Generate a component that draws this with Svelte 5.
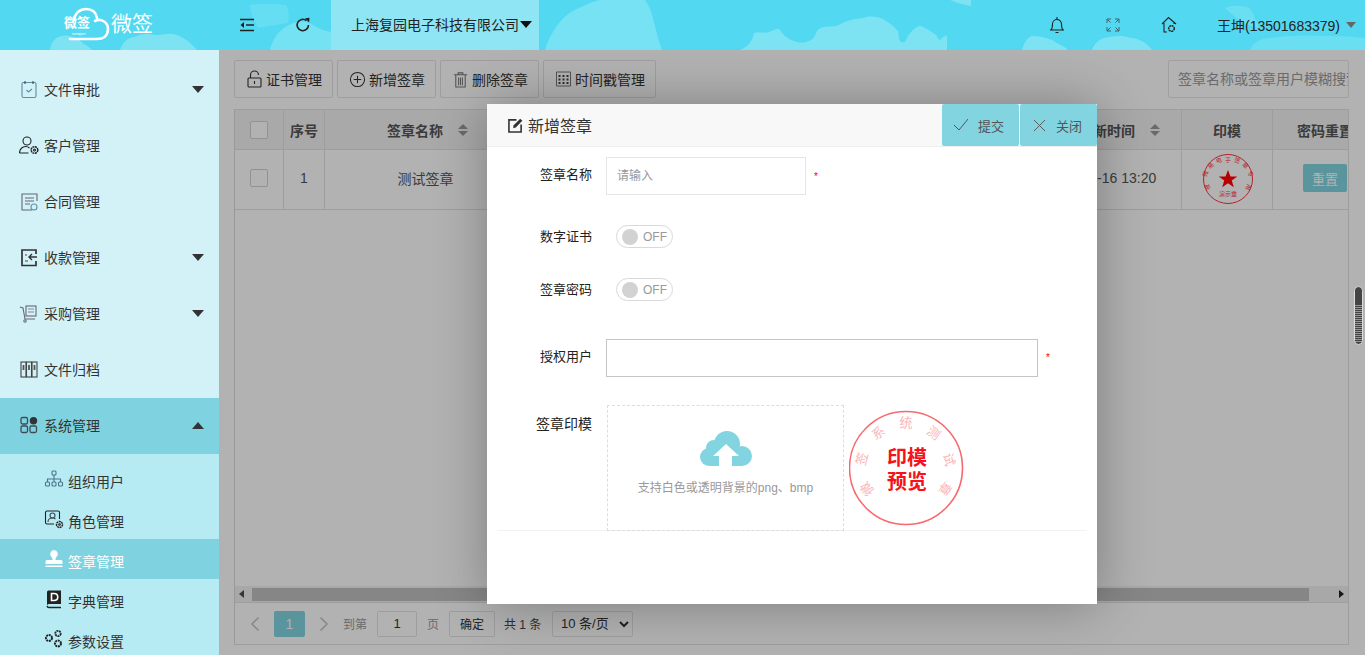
<script>
  const menu = [
    { name: '文件审批', icon: 'clip', caret: true },
    { name: '客户管理', icon: 'user' },
    { name: '合同管理', icon: 'doc' },
    { name: '收款管理', icon: 'pay', caret: true },
    { name: '采购管理', icon: 'cart', caret: true },
    { name: '文件归档', icon: 'files' }
  ]
  const subMenu = [
    { name: '组织用户', icon: 'org' },
    { name: '角色管理', icon: 'role' },
    { name: '签章管理', icon: 'stamp', active: true },
    { name: '字典管理', icon: 'dict' },
    { name: '参数设置', icon: 'gears' }
  ]
  const smallSeal = [
    [1228, 160, 0, '子'], [1219, 161, -20, '电'], [1237, 161, 20, '签'], [1245, 166, 45, '章'],
    [1211, 166, -45, '易'], [1250, 174, 70, '专'], [1206, 174, -70, '微'], [1208, 187, -110, '彼'], [1248, 187, 110, '用']
  ]
  const previewSeal = [
    [868, 488, -130, '微'], [863, 459, -75, '签'], [879, 434, -35, '系'], [906, 424, 0, '统'],
    [933, 434, 35, '测'], [948, 460, 75, '试'], [944, 488, 125, '章']
  ]
</script>

{#snippet icon(name)}
  <svg class="ic" viewBox="0 0 20 20" width="20" height="20" fill="none" stroke="#3f4a52" stroke-width="1.1">
    {#if name === 'clip'}
      <rect x="3" y="3.5" width="14" height="15" rx="1.5" stroke="#5b8fa8" /><path d="M6 2v3M14 2v3" stroke="#444" /><path d="M7.5 11l2 2 3.5-3" stroke="#5b8fa8" />
    {:else if name === 'user'}
      <circle cx="8" cy="6" r="4" stroke="#222" /><path d="M0.5 18c0-4 3-6.500 6-6.500 1.500 0 3 .5 4 1.500M0.500 18h9" stroke="#222" /><circle cx="15.500" cy="15" r="3.300" stroke-dasharray="2 .6" stroke-width="1.500" stroke="#222" /><circle cx="15.500" cy="15" r="1" stroke="#222" />
    {:else if name === 'doc'}
      <path d="M18 10V3H3v16h10" stroke="#667" /><path d="M6 7h9M6 10h9M6 13h5" stroke="#667" /><circle cx="15" cy="16" r="3" stroke="#6a8fa8" />
    {:else if name === 'pay'}
      <path d="M17 7V3H3v15.500h14V14" stroke-width="1.700" stroke="#333" /><path d="M18 10h-8M13 7l-3 3 3 3" stroke-width="1.400" stroke="#333" /><path d="M6 8h2M6 14h3" />
    {:else if name === 'cart'}
      <path d="M1 4l3 1 2 11h10" stroke="#667" /><rect x="7" y="3" width="10" height="10" stroke="#667" /><path d="M9 6h6M9 9h6" stroke="#889" /><circle cx="6" cy="18" r="1.200" stroke="#667" />
    {:else if name === 'files'}
      <rect x="2" y="3" width="5" height="15" stroke="#444" /><rect x="7.500" y="3" width="5" height="15" stroke="#444" /><rect x="13" y="3" width="5" height="15" stroke="#444" /><path d="M4.500 6v5M10 6v5M15.500 6v5" stroke="#555" stroke-width="1.800" />
    {:else if name === 'grid'}
      <rect x="2" y="2.500" width="6.500" height="6.500" rx="1.500" stroke-width="1.300" /><circle cx="14.500" cy="5.700" r="3.700" fill="#333" stroke="none" /><rect x="2" y="11" width="6.500" height="6.500" rx="1.500" stroke-width="1.300" /><rect x="11" y="11" width="6.500" height="6.500" rx="1.500" stroke-width="1.300" />
    {:else if name === 'org'}
      <rect x="8" y="2" width="4" height="4" rx="1" stroke="#4b7488" /><path d="M10 6v4M3.500 13v-3h13v3M10 10v3" stroke="#4b7488" /><rect x="1.500" y="13" width="4" height="4" rx="1" stroke="#4b7488" /><rect x="8" y="13" width="4" height="4" rx="1" stroke="#4b7488" /><rect x="14.500" y="13" width="4" height="4" rx="1" stroke="#4b7488" />
    {:else if name === 'role'}
      <path d="M10 15H3a1.500 1.500 0 0 1-1.500-1.500v-10A1.500 1.500 0 0 1 3 2h11a1.500 1.500 0 0 1 1.500 1.500V10" stroke="#222" /><circle cx="8.500" cy="6.500" r="2.500" /><path d="M4 13c0-3 2-4 4.500-4 1.500 0 2.500.5 3 1" /><circle cx="15.500" cy="15.500" r="3" stroke-dasharray="2 .6" stroke-width="1.500" stroke="#222" /><circle cx="15.500" cy="15.500" r=".8" stroke="#222" />
    {:else if name === 'stamp'}
      <path d="M10 1a4 4 0 0 0-2.500 7c.8.8 1 1.500 1 3H3a1.500 1.500 0 0 0-1.500 1.500V15h17v-2.500A1.500 1.500 0 0 0 17 11h-5.500c0-1.500.2-2.200 1-3A4 4 0 0 0 10 1z" fill="#fff" stroke="none" /><rect x="1.500" y="16.500" width="17" height="1.500" fill="#fff" stroke="none" />
    {:else if name === 'dict'}
      <path d="M3 3a1.500 1.500 0 0 1 1.500-1.500H17V15H5a2 2 0 0 0-2 2z" fill="#222" stroke="none" /><path d="M3 17a2 2 0 0 0 2 1.500h12" stroke="#222" stroke-width="1.300" /><path d="M7.500 4.500h2.500c5 0 5 7 0 7H7.500z" fill="#222" stroke="#fff" stroke-width="1.600" />
    {:else if name === 'gears'}
      <circle cx="5" cy="9" r="3" stroke-width="2" stroke-dasharray="2 .7" stroke="#222" /><circle cx="14" cy="4.500" r="2.700" stroke-width="1.800" stroke-dasharray="2 .7" stroke="#222" /><circle cx="14" cy="14.500" r="3" stroke-width="2" stroke-dasharray="2 .7" stroke="#222" />
    {/if}
  </svg>
{/snippet}

{#snippet sort()}
  <span class="sort"><i class="up"></i><i class="down"></i></span>
{/snippet}

<div class="page">
  <header class="top">
    <svg class="sky" viewBox="0 0 1365 50" preserveAspectRatio="none" fill="#7de3f3">
      <path d="M50 50c1-8 5-13 12-14 6-2 16 2 22 8 4 2 6 4 8 6zM120 50c3-8 8-13 15-13 5-3 12-4 20-2 8 0 14-3 22 0 8 3 14 8 20 15z" />
      <path d="M250 5c12-2 24-1 36 0 4 6 3 12 2 18l-30 5c-4-8-8-16-8-23z" opacity=".45" />
      <path d="M270 50c2-10 8-18 14-22 6-4 14-8 22-6 8 2 12 8 25 10v18z" opacity=".8" />
      <path d="M545 50c4-14 14-30 26-38 12-6 24-12 30-12h44c6 8 8 18 11 30 2 8 4 14 6 20z" opacity=".85" />
      <path d="M740 50c8-3 12-8 14-17 5-2 10 1 15-1 4-1 8-4 10-3 3 4 6 8 12 11 8 3 12 4 20 0 6-4 4-10 10-12 5-3 12 0 18-3 8-5 16-6 24-7 6-2 12-2 20 1 6 4 10 6 15 12 1 4 0 8 3 11 4 1 4 0 6-4 2-4 8-12 14-12 6 3 12 6 16 10 1 4 3 5 5 2 2-2 4-2 5-3v15zM950 0h21v6c-6-1-14-3-21-6z" />
      <path d="M1022 50c2-6 4-12 10-14 8 0 14 2 20 4 6 4 12 6 16 10zM1092 50c2-6 6-10 12-12 10-2 18-3 26 0 8 0 16 4 22 12z" />
      <path d="M1225 8c8-3 18-3 24 0 6 6 6 12 10 20-10-2-20-6-34-20zM1250 50c2-6 10-12 20-12 14-2 30-3 50-2 18-1 32 1 45 2v12z" opacity=".55" />
    </svg>
    <div class="logo">
      <span class="cloud">
        <svg viewBox="0 0 44 34" width="44" height="34" fill="none" stroke="#fff" stroke-width="2.600">
          <path d="M8 13c1-7 6-11 12-11 6 0 10 3 11 9" stroke-linecap="round" />
          <path d="M29 14c6-3 13 1 13 8s-5 10-11 10H4" stroke-linecap="round" />
        </svg>
        <b>微签</b>
        <small>weiqian</small>
      </span>
      <span class="brand">微签</span>
    </div>
    <button class="head-btn" aria-label="收起菜单">
      <svg viewBox="0 0 16 14" width="16" height="14" fill="none" stroke="#222" stroke-width="1.500"><path d="M1 1.500h14M7 7h8M1 12.500h14" /><path d="M5 4L1.500 7 5 10z" fill="#222" stroke="none" /></svg>
    </button>
    <button class="head-btn" aria-label="刷新">
      <svg viewBox="0 0 16 16" width="16" height="16" fill="none" stroke="#222" stroke-width="1.600"><path d="M13.500 8a5.700 5.700 0 1 1-2-4.300" /><path d="M10 1.200l4.500-.4-.4 4.800z" fill="#222" stroke="none" /></svg>
    </button>
    <div class="company">上海复园电子科技有限公司<i class="caret black"></i></div>
    <div class="head-right">
      <span class="hi">
        <svg viewBox="0 0 16 18" width="16" height="18" fill="none" stroke="#222" stroke-width="1.100"><path d="M2 14c1.500-1.500 1.500-3 1.500-6a4.500 4.500 0 0 1 9 0c0 3 0 4.500 1.500 6zM1 14h14M6.500 16.500h3M8 1v2" /></svg>
      </span>
      <span class="hi">
        <svg viewBox="0 0 14 14" width="14" height="14" fill="none" stroke="#44616b" stroke-width="1"><path d="M1 5V1h4M9 1h4v4M13 9v4H9M5 13H1V9M1 1l3.500 3.500M13 1L9.500 4.500M13 13L9.500 9.500M1 13l3.500-3.500" /></svg>
      </span>
      <span class="hi">
        <svg viewBox="0 0 16 18" width="16" height="18" fill="none" stroke="#222" stroke-width="1.100"><path d="M1 8l6.500-6.500L15 8M3 7v9h3M13 7v1" /><circle cx="10.500" cy="12.500" r="2.800" stroke-width="1.500" stroke-dasharray="2 .6" /></svg>
      </span>
      <span class="who">王坤(13501683379)</span>
      <i class="caret gray"></i>
    </div>
  </header>

  <div class="body">
    <aside class="side">
      {#each menu as m}
        <div class="item">
          <span class="item-ic">{@render icon(m.icon)}</span>
          <span class="item-name">{m.name}</span>
          {#if m.caret}<i class="caret"></i>{/if}
        </div>
      {/each}
      <div class="item open">
        <span class="item-ic">{@render icon('grid')}</span>
        <span class="item-name">系统管理</span>
        <i class="caret flip"></i>
      </div>
      <div class="sub">
        {#each subMenu as s}
          <div class="sub-item" class:active={s.active}>
            <span class="sub-ic">{@render icon(s.icon)}</span>
            <span>{s.name}</span>
          </div>
        {/each}
      </div>
    </aside>

    <main class="main">
      <div class="toolbar">
        <button class="tool">
          <svg viewBox="0 0 16 18" width="15" height="18" fill="none" stroke="#333" stroke-width="1.100"><rect x="1.500" y="8" width="13" height="9" rx="1" /><path d="M4 8V5a4 4 0 0 1 8 0" /><path d="M8 11v3" /></svg>
          证书管理
        </button>
        <button class="tool">
          <svg viewBox="0 0 18 18" width="17" height="17" fill="none" stroke="#333" stroke-width="1.100"><circle cx="9" cy="9" r="7.500" /><path d="M9 5v8M5 9h8" /></svg>
          新增签章
        </button>
        <button class="tool">
          <svg viewBox="0 0 16 18" width="15" height="17" fill="none" stroke="#777" stroke-width="1.100"><path d="M1 4h14M5.500 4V2h5v2M3 4.500V17h10V4.500M6 7v8M8 7v8M10 7v8" /></svg>
          删除签章
        </button>
        <button class="tool">
          <svg viewBox="0 0 16 16" width="15" height="16" fill="#444" stroke="none"><path d="M1 1h14v14H1z" fill="none" stroke="#777" /><path d="M3 4h2v2H3zM7 4h2v2H7zM11 4h2v2h-2zM3 7.500h2v2H3zM7 7.500h2v2H7zM11 7.500h2v2h-2zM3 11h2v2H3zM7 11h2v2H7zM11 11h2v2h-2z" /></svg>
          时间戳管理
        </button>
        <input class="search" placeholder="签章名称或签章用户模糊搜索" />
      </div>

      <div class="panel">
        <div class="row head">
          <div class="c"><span class="check"></span></div>
          <div class="c">序号</div>
          <div class="c name-col">签章名称{@render sort()}</div>
          <div class="c">签章用户</div>
          <div class="c">数字证书</div>
          <div class="c time">更新时间{@render sort()}</div>
          <div class="c">印模</div>
          <div class="c clip">密码重置</div>
        </div>
        <div class="row data">
          <div class="c"><span class="check"></span></div>
          <div class="c">1</div>
          <div class="c">测试签章</div>
          <div class="c">王坤</div>
          <div class="c">否</div>
          <div class="c">2021-03-16 13:20</div>
          <div class="c"></div>
          <div class="c clip"><button class="reset">重置</button></div>
        </div>
        <div class="rest"></div>
        <div class="hscroll">
          <i class="arrow left"></i>
          <span class="thumb"></span>
          <i class="arrow right"></i>
        </div>
        <div class="pager">
          <svg viewBox="0 0 10 16" width="10" height="16" fill="none" stroke="#c2c2c2" stroke-width="1.500"><path d="M8.500 1.500L2 8l6.500 6.500" /></svg>
          <span class="cur">1</span>
          <svg viewBox="0 0 10 16" width="10" height="16" fill="none" stroke="#c2c2c2" stroke-width="1.500"><path d="M1.500 1.500L8 8l-6.500 6.500" /></svg>
          <span class="muted to">到第</span>
          <input class="page-no" value="1" />
          <span class="muted">页</span>
          <button class="ok">确定</button>
          <span class="total">共 1 条</span>
          <select class="size"><option>10 条/页</option></select>
        </div>
      </div>

      <div class="shade"></div>

      <section class="modal">
        <div class="modal-top">
          <svg viewBox="0 0 16 16" width="15" height="15" fill="none" stroke="#333" stroke-width="1.700"><path d="M9 2H1v13h13V7" /><path d="M5.500 11l.5-3.300L13 .8 15.300 3l-7 7z" fill="#333" stroke="none" /></svg>
          <span class="modal-title">新增签章</span>
          <div class="modal-btns">
            <button class="act"><svg viewBox="0 0 16 14" width="16" height="14" fill="none" stroke="#555" stroke-width="1"><path d="M1 7l5 5 9-11" /></svg><span>提交</span></button>
            <button class="act x"><svg viewBox="0 0 14 14" width="13" height="13" fill="none" stroke="#555" stroke-width="1"><path d="M1 1l12 12M13 1L1 13" /></svg><span>关闭</span></button>
          </div>
        </div>
        <div class="form">
          <div class="f name">
            <label for="sn">签章名称</label>
            <input id="sn" class="txt short" placeholder="请输入" />
            <em>*</em>
          </div>
          <div class="f sw one"><span class="lab">数字证书</span><span class="toggle"><i></i>OFF</span></div>
          <div class="f sw two"><span class="lab">签章密码</span><span class="toggle"><i></i>OFF</span></div>
          <div class="f users">
            <span class="lab">授权用户</span>
            <div class="txt long"></div>
            <em>*</em>
          </div>
          <div class="f seal">
            <span class="lab big">签章印模</span>
            <div class="upload">
              <svg viewBox="0 0 52 36" width="52" height="36" fill="#82d4e0">
                <circle cx="27" cy="13" r="13" /><circle cx="14" cy="17" r="8" /><circle cx="9" cy="26" r="9" /><circle cx="42" cy="25" r="10" />
                <rect x="9" y="20" width="33" height="15" />
                <path d="M26 13l13 12h-7v11H19V25h-6z" fill="#fff" />
              </svg>
              <span>支持白色或透明背景的png、bmp</span>
            </div>
          </div>
          <div class="line"></div>
        </div>
      </section>

      <svg class="seal-mini" viewBox="1200 151 56 56" width="56" height="56">
        <circle cx="1228" cy="179" r="24.500" fill="none" stroke="#b5222a" stroke-width="1" />
        <path d="M1228 170l2.500 6.500h6.800l-5.500 4 2 6.800-5.800-4-5.800 4 2-6.800-5.500-4h6.800z" fill="#b80000" />
        {#each smallSeal as [x, y, r, t]}
          <text {x} {y} transform="rotate({r} {x} {y})" text-anchor="middle" dominant-baseline="middle" class="mini-t">{t}</text>
        {/each}
        <text x="1228" y="196" text-anchor="middle" class="mini-t">演示章</text>
      </svg>

      <svg class="seal-big" viewBox="849 410 116 116" width="116" height="116">
        <circle cx="906" cy="468" r="56.500" fill="none" stroke="#f8686c" stroke-width="1.600" />
        {#each previewSeal as [x, y, r, t]}
          <text {x} {y} transform="rotate({r} {x} {y})" text-anchor="middle" dominant-baseline="middle" class="big-t">{t}</text>
        {/each}
        <text x="907" y="465" text-anchor="middle" class="big-c">印模</text>
        <text x="907" y="489" text-anchor="middle" class="big-c">预览</text>
      </svg>

      <div class="thumb-y"></div>
    </main>
  </div>
</div>

<style>
  :global(body) { margin: 0; background: #fbfbfb; }
  .page { width: 1365px; height: 655px; overflow: hidden; display: flex; flex-direction: column; font-family: "Liberation Sans", "Noto Sans CJK SC", sans-serif; font-size: 14px; color: #333; }
  button, input, select { font-family: inherit; }
  i { display: block; font-style: normal; }

  .top { position: relative; height: 50px; flex: none; background: #52d9f1; display: flex; align-items: center; color: #222; }
  .sky { position: absolute; left: 0; top: 0; width: 1365px; height: 50px; }
  .logo { position: relative; width: 219px; display: flex; align-items: center; padding-left: 64px; box-sizing: border-box; height: 50px; }
  .cloud { position: relative; width: 47px; height: 34px; margin-top: -3px; }
  .cloud svg { position: absolute; left: 2px; top: 0; }
  .cloud b { position: absolute; left: 0; top: 9px; font-size: 13px; line-height: 14px; color: #fff; letter-spacing: 0; }
  .cloud small { position: absolute; left: 8px; top: 24px; font-size: 4px; line-height: 5px; color: #fff; }
  .brand { color: #fff; font-size: 21px; line-height: 50px; margin-left: 0; margin-top: -3px; }
  .head-btn { position: relative; width: 56px; height: 50px; background: none; border: 0; padding: 0; display: flex; align-items: center; justify-content: center; }
  .company { position: relative; width: 208px; height: 50px; box-sizing: border-box; padding-left: 20px; background: #8fe5f3; display: flex; align-items: center; gap: 1px; line-height: 50px; }
  .head-right { position: relative; margin-left: auto; display: flex; align-items: center; height: 50px; }
  .hi { width: 56px; display: flex; justify-content: center; }
  .who { margin-left: 20px; width: 123px; white-space: nowrap; }

  .caret { width: 0; height: 0; border: 6px solid transparent; border-top: 7px solid #333; border-bottom: 0; }
  .caret.black { border-top-color: #111; margin-top: -1px; }
  .caret.gray { border-top-color: #666; border-left-width: 5px; border-right-width: 5px; border-top-width: 6px; margin: 0 9px 0 6px; }
  .caret.flip { transform: rotate(180deg); }

  .body { flex: 1; display: flex; min-height: 0; }
  .side { width: 219px; flex: none; background: #d3f2f7; padding-top: 12px; overflow: hidden; box-sizing: border-box; }
  .item { height: 56px; box-sizing: border-box; padding: 0 15px 2px 19px; display: flex; align-items: center; color: #333; }
  .item-ic { width: 25px; display: flex; }
  .item-name { flex: 1; }
  .item.open { background: #7fd3e0; }
  .sub { background: #b7ebf3; padding-top: 5px; }
  .sub-item { height: 40px; display: flex; align-items: center; padding-left: 44px; padding-top: 3px; box-sizing: border-box; color: #333; }
  .sub-ic { width: 24px; display: flex; margin-top: -3px; }
  .sub-item.active { background: #7fd3e0; color: #fff; }
  .ic { display: block; }

  .main { position: relative; flex: 1; min-width: 0; background: #fff; padding: 10px 16px 10px 15px; box-sizing: border-box; display: flex; flex-direction: column; }
  .toolbar { display: flex; gap: 4px; height: 38px; flex: none; margin-bottom: 11px; }
  .tool { height: 38px; box-sizing: border-box; padding: 0 10px 0 11px; background: #fff; border: 1px solid #e2e2e2; border-radius: 2px; display: flex; align-items: center; gap: 3px; font-size: 14px; color: #333; white-space: nowrap; }
  .tool svg { width: 17px; flex: none; }
  .search { margin-left: auto; width: 181px; height: 38px; box-sizing: border-box; border: 1px solid #e6e6e6; border-radius: 2px; padding: 0 0 0 9px; font-size: 14px; background: #fff; }
  .search::placeholder { color: #999; }

  .panel { flex: 1; display: flex; flex-direction: column; border: 1px solid #e2e2e2; border-left-color: #dcdcdc; min-height: 0; }
  .row { display: grid; grid-template-columns: 49px 41px 202px 274px 220px 161px 91px 75px; }
  .row .c { display: flex; align-items: center; justify-content: center; border-right: 1px solid #e2e2e2; border-bottom: 1px solid #e2e2e2; min-width: 0; white-space: nowrap; overflow: hidden; box-sizing: border-box; }
  .row .c:last-child { border-right: 0; }
  .head { height: 40px; background: #f2f2f2; font-weight: 700; color: #555; }
  .data { height: 60px; color: #555; }
  .data .c { padding-bottom: 3px; }
  .check { width: 16px; height: 16px; border: 1px solid #d2d2d2; border-radius: 2px; background: #fff; }
  .sort { display: inline-block; margin-left: 15px; }
  .sort i { width: 0; height: 0; border: 5px solid transparent; }
  .sort .up { border-top: 0; border-bottom: 5px solid #999; margin-bottom: 2px; }
  .sort .down { border-bottom: 0; border-top: 5px solid #999; }
  .c.name-col { padding-left: 4px; }
  .c.time { justify-content: flex-end; padding-right: 21px; }
  .row .c.clip { justify-content: flex-start; padding-left: 24px; }
  .reset { width: 44px; height: 28px; border: 0; border-radius: 2px; background: #82d4e0; color: #fff; font-size: 13px; padding: 0; margin-left: 6px; }
  .rest { flex: 1; }

  .hscroll { height: 16px; flex: none; background: #f1f1f1; position: relative; display: flex; align-items: center; border-bottom: 1px solid #e2e2e2; }
  .thumb { position: absolute; left: 17px; width: 1057px; top: 2px; height: 13px; background: #c1c1c1; }
  .arrow { position: absolute; width: 0; height: 0; border: 4px solid transparent; }
  .arrow.left { left: 4px; border-left: 0; border-right: 5px solid #505050; }
  .arrow.right { right: 4px; border-right: 0; border-left: 5px solid #202020; }
  .pager { height: 41px; flex: none; display: flex; align-items: center; padding-left: 15px; font-size: 13px; }
  .cur { width: 31px; height: 26px; margin: 0 14px 0 14px; background: #82d4e0; color: #fff; border-radius: 2px; display: flex; align-items: center; justify-content: center; font-size: 14px; }
  .to { margin: 0 10px 0 14px; }
  .muted { color: #999; font-size: 12px; }
  .page-no { width: 40px; height: 26px; box-sizing: border-box; border: 1px solid #e2e2e2; border-radius: 2px; text-align: center; margin-right: 10px; font-size: 13px; color: #333; padding: 0; background: #fff; }
  .ok { width: 46px; height: 26px; margin: 0 9px 0 10px; border: 1px solid #e2e2e2; border-radius: 2px; background: #fff; font-size: 12px; color: #333; padding: 0; }
  .total { width: 48px; color: #444; white-space: nowrap; font-size: 12px; }
  .size { width: 81px; height: 26px; border: 1px solid #e2e2e2; border-radius: 2px; background: #fff; font-size: 13px; color: #333; padding-left: 4px; }

  .shade { position: absolute; inset: 0; background: rgba(0, 0, 0, 0.3); }
  .modal { position: absolute; left: 268px; top: 54px; width: 610px; height: 500px; background: #fff; box-shadow: 1px 1px 50px rgba(0, 0, 0, 0.3); }
  .modal-top { height: 42px; background: #f8f8f8; border-bottom: 1px solid #eee; display: flex; align-items: center; padding-left: 21px; }
  .modal-title { font-size: 16px; margin-left: 5px; color: #333; }
  .modal-btns { margin-left: auto; display: flex; gap: 1px; align-self: flex-start; }
  .act { width: 77px; height: 42px; border: 0; border-radius: 2px; background: #82d4e0; color: #555; font-size: 13px; display: flex; align-items: center; gap: 9px; padding: 0 0 0 11px; }
  .act.x { gap: 10px; padding-left: 13px; }
  .form { height: 457px; display: flex; flex-direction: column; font-size: 13px; color: #222; }
  .f { display: flex; align-items: center; }
  .f label, .lab { width: 105px; text-align: right; flex: none; position: relative; top: -1px; }
  .f em { color: #f00; font-style: normal; font-size: 10px; }
  .txt { box-sizing: border-box; background: #fff; height: 38px; }
  .short { width: 200px; margin-left: 14px; border: 1px solid #e6e6e6; padding: 0 0 0 10px; font-size: 12px; }
  .short::placeholder { color: #999; }
  .long { width: 432px; margin-left: 14px; border: 1px solid #c4c4c4; }
  .name { margin-top: 10px; }
  .name label { margin-top: -4px; }
  .name em { margin-left: 8px; }
  .users em { margin-left: 8px; margin-top: -2px; }
  .users .lab { top: -3px; }
  .toggle { margin-left: 24px; width: 57px; height: 23px; box-sizing: border-box; border: 1px solid #d9d9d9; border-radius: 12px; display: flex; align-items: center; padding-left: 5px; gap: 5px; color: #999; font-size: 12px; }
  .toggle i { width: 16px; height: 16px; border-radius: 50%; background: #d2d2d2; }
  .sw.one { margin-top: 30px; }
  .sw.two { margin-top: 30px; }
  .users { margin-top: 38px; }
  .seal { margin-top: 28px; align-items: flex-start; }
  .lab.big { font-size: 14px; padding-top: 9px; }
  .upload { position: relative; z-index: 1; width: 237px; height: 126px; box-sizing: border-box; margin-left: 15px; border: 1px dashed #ddd; display: flex; flex-direction: column; align-items: center; padding-top: 25px; gap: 12px; font-size: 12px; color: #999; }
  .upload svg { flex: none; }
  .upload span { margin-top: -1px; }
  .line { margin: -1px 10px 0; height: 1px; background: #f2f2f2; }

  .seal-mini { position: absolute; left: 981px; top: 101px; }
  .mini-t { font-size: 6px; fill: #b5222a; }
  .seal-big { position: absolute; left: 630px; top: 360px; }
  .big-t { font-size: 13px; fill: #fbb4b6; }
  .big-c { font-size: 20px; font-weight: 700; fill: #f5131b; }
  .thumb-y { position: absolute; left: 1135px; top: 236px; width: 9px; height: 59px; box-sizing: border-box; border: 1px solid #ddd; border-radius: 5px; background: repeating-linear-gradient(#4cc26a 0 1px, #444 1px 2px) 0 18px no-repeat, #444; background-size: 100% 38px; }
</style>
